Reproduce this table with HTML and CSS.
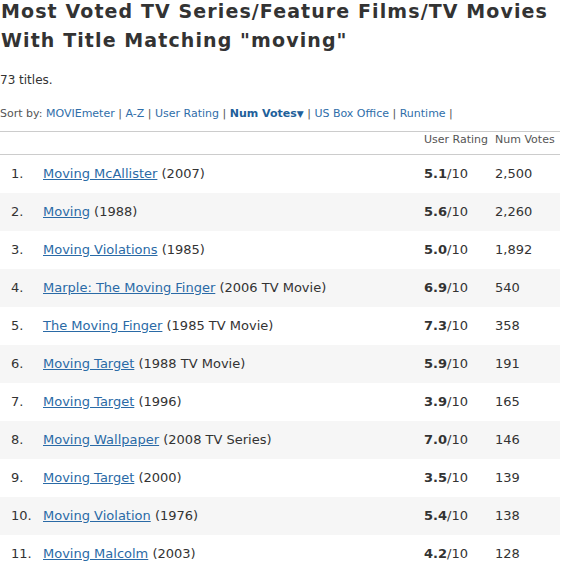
FILE: index.html
```html
<!DOCTYPE html>
<html>
<head>
<meta charset="utf-8">
<link rel="stylesheet" href="styles.css">
</head>
<body>
<div class="page">
  <h1 class="title">Most Voted TV Series/Feature Films/TV Movies With Title Matching "moving"</h1>
  <p class="count">73 titles.</p>
  <p class="sort">Sort by: <a href="#">MOVIEmeter</a> | <a href="#">A-Z</a> | <a href="#">User Rating</a> | <a href="#" class="active">Num Votes<span class="arrow">&#9660;</span></a> | <a href="#">US Box Office</a> | <a href="#">Runtime</a> |</p>
  <div class="results">
    <div class="row head">
      <div class="num"></div>
      <div class="name"></div>
      <div class="rating">User Rating</div>
      <div class="votes">Num Votes</div>
    </div>
    <div class="row">
      <div class="num">1.</div>
      <div class="name"><a href="#">Moving McAllister</a> (2007)</div>
      <div class="rating"><b>5.1</b>/10</div>
      <div class="votes">2,500</div>
    </div>
    <div class="row alt">
      <div class="num">2.</div>
      <div class="name"><a href="#">Moving</a> (1988)</div>
      <div class="rating"><b>5.6</b>/10</div>
      <div class="votes">2,260</div>
    </div>
    <div class="row">
      <div class="num">3.</div>
      <div class="name"><a href="#">Moving Violations</a> (1985)</div>
      <div class="rating"><b>5.0</b>/10</div>
      <div class="votes">1,892</div>
    </div>
    <div class="row alt">
      <div class="num">4.</div>
      <div class="name"><a href="#">Marple: The Moving Finger</a> (2006 TV Movie)</div>
      <div class="rating"><b>6.9</b>/10</div>
      <div class="votes">540</div>
    </div>
    <div class="row">
      <div class="num">5.</div>
      <div class="name"><a href="#">The Moving Finger</a> (1985 TV Movie)</div>
      <div class="rating"><b>7.3</b>/10</div>
      <div class="votes">358</div>
    </div>
    <div class="row alt">
      <div class="num">6.</div>
      <div class="name"><a href="#">Moving Target</a> (1988 TV Movie)</div>
      <div class="rating"><b>5.9</b>/10</div>
      <div class="votes">191</div>
    </div>
    <div class="row">
      <div class="num">7.</div>
      <div class="name"><a href="#">Moving Target</a> (1996)</div>
      <div class="rating"><b>3.9</b>/10</div>
      <div class="votes">165</div>
    </div>
    <div class="row alt">
      <div class="num">8.</div>
      <div class="name"><a href="#">Moving Wallpaper</a> (2008 TV Series)</div>
      <div class="rating"><b>7.0</b>/10</div>
      <div class="votes">146</div>
    </div>
    <div class="row">
      <div class="num">9.</div>
      <div class="name"><a href="#">Moving Target</a> (2000)</div>
      <div class="rating"><b>3.5</b>/10</div>
      <div class="votes">139</div>
    </div>
    <div class="row alt">
      <div class="num">10.</div>
      <div class="name"><a href="#">Moving Violation</a> (1976)</div>
      <div class="rating"><b>5.4</b>/10</div>
      <div class="votes">138</div>
    </div>
    <div class="row">
      <div class="num">11.</div>
      <div class="name"><a href="#">Moving Malcolm</a> (2003)</div>
      <div class="rating"><b>4.2</b>/10</div>
      <div class="votes">128</div>
    </div>
  </div>
</div>
</body>
</html>
```
FILE: styles.css
```css
html, body {
  margin: 0;
  padding: 0;
  background: #ffffff;
}
body {
  font-family: "DejaVu Sans", Verdana, sans-serif;
  color: #333333;
}
.page {
  width: 560px;
}
a {
  color: #2a6aa6;
}
.title {
  margin: -3px 0 0;
  padding: 0 0 0 1px;
  font-size: 19px;
  line-height: 29px;
  letter-spacing: 1.1px;
  font-weight: bold;
  color: #333333;
}
.count {
  margin: 0;
  padding-top: 17px;
  font-size: 12px;
  line-height: 16px;
}
.sort {
  margin: 0;
  padding-top: 19px;
  font-size: 11px;
  line-height: 14px;
  color: #555555;
}
.sort a {
  text-decoration: none;
  color: #2f6ea9;
}
.sort a.active {
  font-weight: bold;
  color: #215f9a;
}
.sort .arrow {
  font-size: 9px;
}
.results {
  margin-top: 10px;
  border-top: 1px solid #cccccc;
}
.row {
  display: grid;
  grid-template-columns: 43px 1fr 71px 65px;
  font-size: 13px;
  line-height: 16px;
}
.row > div {
  padding: 11px 0;
}
.row .num {
  padding-left: 11px;
}
.row.alt {
  background: #f6f6f6;
}
.row.head {
  font-size: 11px;
  line-height: 13px;
  color: #555555;
  border-bottom: 1px solid #cccccc;
}
.row.head > div {
  padding: 1px 0 8px;
}
.rating b {
  font-weight: bold;
}
```
